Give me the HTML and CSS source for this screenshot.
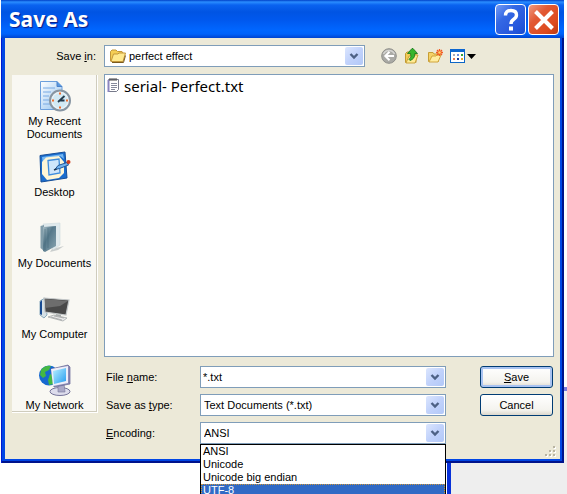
FILE: index.html
```html
<!DOCTYPE html>
<html lang="en">
<head>
    <meta charset="UTF-8">
    <meta name="viewport" content="width=device-width, initial-scale=1.0">
    <title>Save As</title>
    <link rel="stylesheet" href="styles.css">
</head>
<body>
    <!-- Parent window showing behind the dialog -->
    <div class="backdrop">
        <div class="backdrop-page"></div>
        <div class="backdrop-side"></div>
    </div>

    <main class="dialog">
        <header class="titlebar">
            <h1>Save As</h1>
            <button class="caption-btn help" type="button" aria-label="Help">
                <svg width="30" height="30" viewBox="0 0 30 30"><path d="M9.500 10.500Q9.500 5.500 15 5.500Q20.500 5.500 20.500 10Q20.500 12.500 17.500 14.500Q15 16.200 15 19" fill="none" stroke="#fff" stroke-width="3.400"/><rect x="13" y="21.500" width="4" height="4" fill="#fff"/></svg>
            </button>
            <button class="caption-btn close" type="button" aria-label="Close">
                <svg width="30" height="30" viewBox="0 0 30 30"><path d="M6.500 6.500l17 17M23.500 6.500l-17 17" stroke="#fff" stroke-width="4"/></svg>
            </button>
        </header>

        <form class="content">
            <!-- Folder selection and toolbar -->
            <div class="toolbar">
                <label class="look-in" for="folder">Save <u>i</u>n:</label>
                <div class="combo">
                    <svg class="folder" width="18" height="16" viewBox="0 0 18 16"><path d="M1.500 13V3.500L3 2h4l1.500 1.500H13L14 5v8z" fill="#f5ce55" stroke="#c3973a"/><path d="M2 13.500L4.500 6H9l1-1h6.500L14 13.500z" fill="#ffe98e" stroke="#c3973a"/><path d="M3 14.500h11.500l2-7" fill="none" stroke="#7b5b1e"/></svg>
                    <select id="folder"><option>perfect effect</option></select>
                    <svg class="arrow" width="18" height="18" viewBox="0 0 18 18"><path d="M5.500 7l3.500 3.500L12.500 7" fill="none" stroke="#4d6185" stroke-width="2.400"/></svg>
                </div>
                <div class="tools">
                    <button type="button" aria-label="Back"><svg width="16" height="16" viewBox="0 0 16 16"><circle cx="8" cy="8" r="7.300" fill="#aaaaa5" stroke="#8f8f8b"/><path d="M2.500 6a6 6 0 0 1 11 0" fill="none" stroke="#d5d5d2" stroke-width="1.500"/><path d="M13 8H4.500M8.500 3.800L4.300 8l4.200 4.200" fill="none" stroke="#fff" stroke-width="2"/></svg></button>
                    <button type="button" aria-label="Up One Level"><svg width="16" height="16" viewBox="0 0 16 16"><path d="M1.500 14.500V5.500L3 4h3l1 1.500h5v9z" fill="#f3cb55" stroke="#c19a32"/><path d="M2 15l3-7h4l1-1h4l-3 8z" fill="#ffeb93" stroke="#c9a33c"/><path d="M6 12.500Q11 11 10.800 5.500H13.500L9 .5H8L3.500 5.500h3Q8 9 5 11.500z" fill="#36b52c" stroke="#13731a" stroke-width=".8"/></svg></button>
                    <button type="button" aria-label="Create New Folder"><svg width="16" height="16" viewBox="0 0 16 16"><path d="M1.500 13.500V4.500H6l1 1.500h4.500v7.500z" fill="#f5d268" stroke="#c79e35"/><path d="M2 14l3-6h4l1-1h4l-3 7z" fill="#ffeda0" stroke="#d0a43b"/><path d="M12.500 1v7M9 4.500h7M10 2l5 5M15 2l-5 5" stroke="#f15b24" stroke-width="1.300"/><circle cx="12.500" cy="4.500" r="1.300" fill="#ffd866"/></svg></button>
                    <button class="views" type="button" aria-label="View Menu"><svg width="26" height="16" viewBox="0 0 26 16"><rect x=".5" y="1.500" width="14" height="13" fill="#fff" stroke="#0c66c6"/><path d="M0 1h15v3H0z" fill="#0c66d0"/><path d="M3 6h2v2H3z" fill="#a9a9b5"/><path d="M7 6h2v2H7z" fill="#6d8ee0"/><path d="M11 6h2v2h-2z" fill="#35a03b"/><path d="M3 10h2v2H3z" fill="#e77b55"/><path d="M7 10h2v2H7z" fill="#173a9c"/><path d="M11 10h2v2h-2z" fill="#e6a42e"/><path d="M17 6h9l-4.500 5z" fill="#000"/></svg></button>
                </div>
            </div>

            <div class="columns">
                <!-- Places bar -->
                <nav class="places">
                    <a href="#recent">
                        <svg width="32" height="32" viewBox="0 0 32 32"><defs><linearGradient id="sheet" x2="1" y2="1"><stop stop-color="#fff"/><stop offset="1" stop-color="#8fc0ee"/></linearGradient></defs><path d="M1.500 1.500H18l5 5v23H1.500z" fill="url(#sheet)" stroke="#6c9fdc"/><path d="M18 1.500v5h5" fill="#5b98df" stroke="#4a82ca"/><path d="M4 8h12M4 12h8M4 16h6M4 20h6M4 24h7" stroke="#78aae4"/><circle cx="21" cy="20.500" r="10" fill="#eaf3f8" stroke="#8795a2" stroke-width="2"/><circle cx="21" cy="20.500" r="7.500" fill="#d2e9f4"/><path d="M21 12.500v2M21 26.500v2M13 20.500h2M27 20.500h2" stroke="#f06c2c" stroke-width="2"/><path d="M19 22l6.500-6M20.500 20.500h5" stroke="#233a4c" stroke-width="1.800"/></svg>
                        <span>My Recent Documents</span>
                    </a>
                    <a href="#desktop">
                        <svg width="32" height="32" viewBox="0 0 32 32"><path d="M1 4.500L26 1l2 26L2 31z" fill="#1a6dce" stroke="#164f99"/><path d="M3 6l21-3 1 5-4-3L6 8l-2 6z" fill="#75b8f3"/><path d="M7 6.500L20 5l5 6v11l-5 5-12 2-5-6V11z" fill="#fff6d6"/><path d="M9 9.500L20 8l1 14-11 2z" fill="#cfe6fb" stroke="#3f8ddd" stroke-width="1.300"/><path d="M16 18.500l3-4 9-3 1.500 2.500-9 3.500z" fill="#70b2ef" stroke="#245797"/><circle cx="29.500" cy="11" r="2" fill="#ce3f1f"/><path d="M15 19l2.500-1" stroke="#183452" stroke-width="1.500"/></svg>
                        <span>Desktop</span>
                    </a>
                    <a href="#documents">
                        <svg width="32" height="32" viewBox="0 0 32 32"><defs><linearGradient id="glass" x2="1" y2="1"><stop stop-color="#a9bec6"/><stop offset=".4" stop-color="#55788a"/><stop offset="1" stop-color="#8aa5b1"/></linearGradient></defs><path d="M13 27l12-3-6 4-8 2z" fill="#c9cdcc"/><path d="M4 2l17-1v22l-7 5z" fill="#dfe9ec" stroke="#cfdadd" stroke-width=".6"/><path d="M1.500 4L5 3v26l-3.500-3z" fill="#819ca9"/><path d="M4 5l13-1v20L6 30l-2-1z" fill="url(#glass)"/><path d="M6 7v21M9 6v20" stroke="#45697a" opacity=".5"/></svg>
                        <span>My Documents</span>
                    </a>
                    <a href="#computer">
                        <svg width="32" height="32" viewBox="0 0 32 32"><path d="M1 8l5-3 2 17-3 3-4-3z" fill="#d5e0e6" stroke="#8babbc"/><path d="M1 9l2-2v15l-2-1z" fill="#174a91"/><path d="M5 5l25 2-3 15-21-3z" fill="#494949" stroke="#c4c8c9" stroke-width="1.200"/><path d="M6 6l23 2-8 5-15 2z" fill="#6d6d6d"/><path d="M17 21l5 1v3h-6z" fill="#a9adad"/><path d="M9 24l6-2 13 3-4 3z" fill="#e9eaea" stroke="#a5aaaa" stroke-width=".8"/><path d="M12 24l11 3M15 23l10 2" stroke="#999" stroke-width=".7"/></svg>
                        <span>My Computer</span>
                    </a>
                    <a href="#network">
                        <svg width="32" height="32" viewBox="0 0 32 32"><defs><linearGradient id="screen" x2="1" y2="1"><stop stop-color="#b9f1ff"/><stop offset="1" stop-color="#269cf0"/></linearGradient></defs><circle cx="10" cy="11.500" r="10" fill="#1769d0"/><path d="M2 6Q6 1 12 2l-2 4-4 2 1 4-3 2-3-3zM11 10l4 2v8l-5 1-1-5z" fill="#44b843"/><ellipse cx="21" cy="27.500" rx="10" ry="4" fill="#dddcec" stroke="#77759a"/><path d="M19 19h6l1 9h-7z" fill="#aaa8c6" stroke="#77759a" stroke-width=".6"/><path d="M12 5l17-4 2 2v17l-16 3z" fill="#8c8ab5" stroke="#656595" stroke-width=".7"/><path d="M12 5l17-3v17l-15 3z" fill="#eeeef9"/><path d="M14 7l13-3v13l-12 3z" fill="url(#screen)"/></svg>
                        <span>My Network</span>
                    </a>
                </nav>

                <div class="main">
                    <ul class="files">
                        <li>
                            <svg width="14" height="16" viewBox="0 0 14 16"><path d="M1.500 2.500h10v10l-2 2h-8z" fill="#fff" stroke="#777a8b"/><path d="M1.500 3v12" stroke="#8c85bf" stroke-width="2"/><path d="M3 1v3M5 1v3M7 1v3M9 1v3" stroke="#444"/><path d="M4 6.500h6M4 8.500h6M4 10.500h6M4 12.500h4" stroke="#868a9c"/></svg>
                            serial- Perfect.txt
                        </li>
                    </ul>

                    <!-- File name, type and encoding -->
                    <div class="fields">
                        <label for="filename">File <u>n</u>ame:</label>
                        <div class="combo name-combo">
                            <input type="text" id="filename" value="*.txt">
                            <svg class="arrow" width="18" height="18" viewBox="0 0 18 18"><path d="M5.500 7l3.500 3.500L12.500 7" fill="none" stroke="#4d6185" stroke-width="2.400"/></svg>
                        </div>
                        <button class="btn default" type="button"><u>S</u>ave</button>

                        <label for="filetype">Save as <u>t</u>ype:</label>
                        <div class="combo">
                            <select id="filetype"><option>Text Documents (*.txt)</option></select>
                            <svg class="arrow" width="18" height="18" viewBox="0 0 18 18"><path d="M5.500 7l3.500 3.500L12.500 7" fill="none" stroke="#4d6185" stroke-width="2.400"/></svg>
                        </div>
                        <button class="btn" type="button">Cancel</button>

                        <label for="encoding"><u>E</u>ncoding:</label>
                        <div class="combo">
                            <select id="encoding">
                                <option>ANSI</option>
                                <option>Unicode</option>
                                <option>Unicode big endian</option>
                                <option>UTF-8</option>
                            </select>
                            <svg class="arrow" width="18" height="18" viewBox="0 0 18 18"><path d="M5.500 7l3.500 3.500L12.500 7" fill="none" stroke="#4d6185" stroke-width="2.400"/></svg>
                            <ul class="dropdown" role="listbox" aria-label="Encoding">
                                <li role="option">ANSI</li>
                                <li role="option">Unicode</li>
                                <li role="option">Unicode big endian</li>
                                <li role="option" class="selected" aria-selected="true">UTF-8</li>
                            </ul>
                        </div>
                    </div>
                </div>
            </div>
        </form>

        <svg class="grip" width="12" height="12" viewBox="0 0 12 12"><path d="M9 1h2v2H9zM9 5h2v2H9zM5 5h2v2H5zM9 9h2v2H9zM5 9h2v2H5zM1 9h2v2H1z" fill="#fff"/><path d="M8 0h2v2H8zM8 4h2v2H8zM4 4h2v2H4zM8 8h2v2H8zM4 8h2v2H4zM0 8h2v2H0z" fill="#b8b4a2"/></svg>
    </main>
</body>
</html>
```
FILE: styles.css
```css
* {
    box-sizing: border-box;
}

body {
    margin: 0;
    min-height: 100vh;
    overflow: hidden;
    background-color: #fff;
    font-family: "Liberation Sans", Arial, sans-serif;
    font-size: 11px;
    line-height: 13px;
    color: #000;
}

ul {
    list-style: none;
    margin: 0;
    padding: 0;
}

svg {
    display: block;
    flex: none;
}

button,
input,
select {
    font: inherit;
    color: inherit;
}

/* Parent window */
.backdrop {
    position: absolute;
    inset: 0;
    z-index: -1;
    display: flex;
}

.backdrop-page {
    width: 451px;
    border-right: 4px solid #0831d9;
}

.backdrop-side {
    flex: 1;
    background: linear-gradient(#fff 387px, #7b7be0 387px, #7b7be0 391px, #eee 391px);
}

/* Dialog frame */
.dialog {
    position: relative;
    margin: 0 3px 0 1px;
    padding: 0 4px 4px;
    background: #0046e5;
    box-shadow: inset 1px 0 #0019cf, inset -2px -2px #00138c;
}

.titlebar {
    display: flex;
    align-items: center;
    gap: 2px;
    height: 38px;
    margin: 0 -4px;
    padding: 0 5px 0 8px;
    background: linear-gradient(#0040c8, #2a8dff 2px, #0a63f0 5px, #0054e3 12px, #0058ee 20px, #0066ff 30px, #0062fa 34px, #0043cf);
}

.titlebar h1 {
    flex: 1;
    margin: 0;
    font-family: "Noto Sans", "Open Sans", sans-serif;
    font-size: 21px;
    line-height: 30px;
    color: #fff;
    text-shadow: 1px 1px 1px #0a1883;
}

.caption-btn {
    width: 31px;
    height: 31px;
    padding: 0;
    border: 1px solid #fff;
    border-radius: 4px;
    overflow: hidden;
}

.help {
    background: linear-gradient(135deg, #739bf5, #3468e4 35%, #2657dc 75%, #174bd0);
}

.close {
    background: linear-gradient(135deg, #f09a80, #e25a35 35%, #dd4a1e 75%, #b93a13);
}

.content {
    padding: 7px 6px 15px 7px;
    background-color: #ece9d8;
}

/* Toolbar */
.toolbar {
    display: grid;
    grid-template-columns: 84px 1fr 181px;
    gap: 8px;
    align-items: center;
    margin-bottom: 7px;
}

.look-in {
    text-align: right;
}

.tools {
    display: flex;
    gap: 7px;
    padding-left: 8px;
}

.tools button {
    padding: 0;
    border: 0;
    background: none;
}

/* Text boxes and drop-downs */
.combo {
    position: relative;
    display: flex;
    align-items: center;
    height: 22px;
    padding: 0 1px 0 3px;
    background-color: #fff;
    border: 1px solid #7f9db9;
}

.combo select,
.combo input {
    flex: 1;
    min-width: 0;
    height: 18px;
    padding: 0;
    border: 0;
    outline: none;
    background: none;
    appearance: none;
}

.name-combo {
    padding-left: 2px;
}

.folder {
    margin: 0 2px 0 1px;
}

.arrow {
    border-radius: 2px;
    background: linear-gradient(135deg, #dce6fe, #c1d2fb 50%, #b2c8f8);
    pointer-events: none;
}

/* Places bar and file area */
.columns {
    display: grid;
    grid-template-columns: 86px 1fr;
    gap: 6px;
}

.places {
    align-self: start;
    margin-top: 1px;
    padding-top: 5px;
    background-color: #f9f8f3;
    border: solid #fff;
    border-width: 0 1px 1px 0;
    box-shadow: inset -1px -1px #cfccbd;
}

.places a {
    display: flex;
    flex-direction: column;
    align-items: center;
    gap: 3px;
    min-height: 71px;
    color: #000;
    text-align: center;
    text-decoration: none;
}

.places a:last-child {
    min-height: 0;
}

.places span {
    max-width: 76px;
}

.files {
    min-height: 283px;
    padding: 2px;
    background-color: #fff;
    border: 1px solid #7f9db9;
}

.files li {
    display: flex;
    gap: 3px;
    font-family: "Noto Sans", "Open Sans", sans-serif;
    font-size: 15px;
    line-height: 18px;
}

.fields {
    display: grid;
    grid-template-columns: 96px 1fr 108px;
    row-gap: 6px;
    align-items: center;
    margin-top: 9px;
}

.fields label {
    padding-left: 2px;
}

.btn {
    height: 22px;
    margin: 0 1px 0 34px;
    padding: 0;
    border: 1px solid #003c74;
    border-radius: 3px;
    background: linear-gradient(#fff, #f4f3ee 75%, #dcd8cd);
}

.default {
    box-shadow: inset 0 0 0 2px #a9c3f1;
}

/* Open encoding list */
.dropdown {
    position: absolute;
    top: 21px;
    left: -1px;
    right: -1px;
    z-index: 1;
    background-color: #fff;
    border: 1px solid #000;
}

.dropdown li {
    padding-left: 2px;
}

.dropdown .selected {
    color: #fff;
    background-color: #316ac5;
    outline: 1px dotted #ce953a;
    outline-offset: -1px;
}

.grip {
    position: absolute;
    right: 7px;
    bottom: 5px;
}
```
